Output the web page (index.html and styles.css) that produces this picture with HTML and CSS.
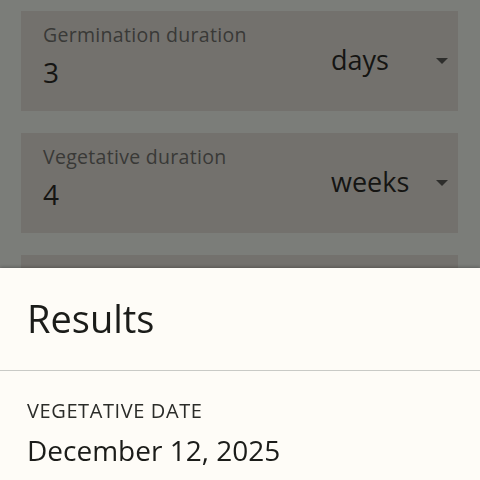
FILE: index.html
```html
<!DOCTYPE html>
<html lang="en">
<head>
<meta charset="utf-8">
<title>Results</title>
<link rel="stylesheet" href="styles.css">
</head>
<body>
<main class="page">
  <div class="field">
    <div class="field-main">
      <div class="field-label">Germination duration</div>
      <div class="field-value">3</div>
    </div>
    <div class="field-select">
      <span class="select-text">days</span>
      <svg class="select-arrow" width="12" height="6" viewBox="0 0 12 6"><path d="M0 0H12L6 6Z" fill="#2e2e2c"/></svg>
    </div>
  </div>
  <div class="field">
    <div class="field-main">
      <div class="field-label">Vegetative duration</div>
      <div class="field-value">4</div>
    </div>
    <div class="field-select">
      <span class="select-text">weeks</span>
      <svg class="select-arrow" width="12" height="6" viewBox="0 0 12 6"><path d="M0 0H12L6 6Z" fill="#2e2e2c"/></svg>
    </div>
  </div>
  <div class="field"></div>
</main>
<section class="sheet">
  <h2 class="sheet-title">Results</h2>
  <div class="sheet-body">
    <div class="result-label">VEGETATIVE DATE</div>
    <div class="result-value">December 12, 2025</div>
  </div>
</section>
</body>
</html>
```
FILE: styles.css
```css
html, body {
  margin: 0;
  padding: 0;
  height: 100%;
  overflow: hidden;
}
body {
  background: #7b7d79;
  font-family: "Open Sans", "Noto Sans", sans-serif;
}
.page {
  display: flex;
  flex-direction: column;
  gap: 22px;
  padding: 11px 22px 0 21px;
}
.field {
  display: flex;
  align-items: flex-start;
  height: 100px;
  background: #73716d;
  padding: 0 10px 0 22px;
  box-sizing: border-box;
}
.field-main {
  flex: 1;
  padding-top: 12px;
}
.field-label {
  font-size: 19.5px;
  line-height: 24px;
  letter-spacing: 0.3px;
  color: #393937;
}
.field-value {
  font-size: 28px;
  line-height: 36px;
  color: #151513;
  margin-top: 7px;
}
.field-select {
  display: flex;
  align-items: flex-start;
  padding-top: 33px;
}
.select-text {
  font-size: 27px;
  line-height: 32px;
  color: #151513;
  width: 105px;
}
.select-arrow {
  display: block;
  margin-top: 14px;
}
.sheet {
  position: fixed;
  left: 0;
  right: 0;
  top: 268px;
  bottom: 0;
  background: #fefcf7;
  box-shadow: 0 -1px 3px rgba(0, 0, 0, 0.25);
}
.sheet-title {
  margin: 0;
  font-weight: 400;
  font-size: 38px;
  line-height: 48px;
  color: #1b1c19;
  padding: 26px 27px 28px;
  border-bottom: 1px solid #c9cac6;
}
.sheet-body {
  padding: 28px 27px 0;
}
.result-label {
  font-size: 20px;
  line-height: 24px;
  letter-spacing: 0.6px;
  color: #2b2c29;
}
.result-value {
  font-size: 28px;
  line-height: 36px;
  color: #1b1c19;
  margin-top: 9px;
}
```
